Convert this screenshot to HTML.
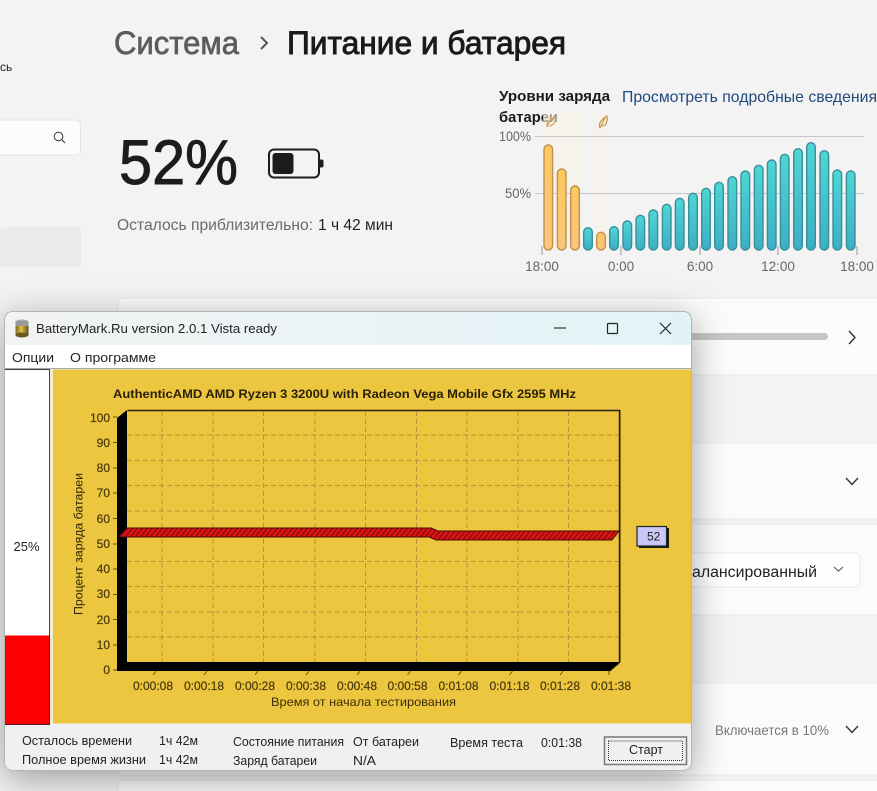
<!DOCTYPE html>
<html><head><meta charset="utf-8">
<style>
html,body{margin:0;padding:0;background:#f3f3f3;width:877px;height:791px;overflow:hidden}
svg{display:block;position:absolute;left:0;top:0;filter:blur(.35px)}
text{font-family:"Liberation Sans",sans-serif}
#win{position:absolute;left:4px;top:311px;width:688px;height:460px;border-radius:8px;box-shadow:0 8px 36px rgba(0,0,0,.36);background:#f0f0f0}
</style></head>
<body>
<svg width="877" height="791" viewBox="0 0 877 791">
<defs>
<linearGradient id="t" x1="0" y1="0" x2="0" y2="1"><stop offset="0" stop-color="#4fd6d4"/><stop offset="1" stop-color="#3cafc4"/></linearGradient>
<linearGradient id="o" x1="0" y1="0" x2="0" y2="1"><stop offset="0" stop-color="#fdc95f"/><stop offset="1" stop-color="#fbc57c"/></linearGradient>
</defs>
<rect width="877" height="791" fill="#f3f3f3"/>
<text x="0" y="71" font-size="12" fill="#222">сь</text>
<rect x="-5" y="120" width="85.500" height="35" rx="4" fill="#fcfcfc" stroke="#e4e4e4"/>
<circle cx="58.500" cy="136.500" r="4.300" fill="none" stroke="#444" stroke-width="1.100"/>
<path d="M61.500 139.500L65 143" stroke="#444" stroke-width="1.100"/>
<rect x="0" y="227" width="81" height="40" rx="3" fill="#ebebeb"/>

<text x="114" y="54" font-size="32" fill="#5c5c5c" stroke="#5c5c5c" stroke-width=".7" textLength="125" lengthAdjust="spacingAndGlyphs">Система</text>
<path d="M261 37L267 43L261 49" fill="none" stroke="#555" stroke-width="2"/>
<text x="287" y="54" font-size="32" fill="#1a1a1a" stroke="#1a1a1a" stroke-width=".9" textLength="279" lengthAdjust="spacingAndGlyphs">Питание и батарея</text>

<text x="119" y="184" font-size="63" fill="#1c1c1c" stroke="#1c1c1c" stroke-width=".9" textLength="119" lengthAdjust="spacingAndGlyphs">52%</text>
<rect x="269" y="149.500" width="50" height="28" rx="5" fill="none" stroke="#1c1c1c" stroke-width="2"/>
<rect x="272.500" y="153" width="21" height="21" rx="3" fill="#1c1c1c"/>
<path d="M320 159.500h1.500a2 2 0 0 1 2 2v4a2 2 0 0 1 -2 2h-1.500z" fill="#1c1c1c"/>
<text x="117" y="230" font-size="15.500" fill="#6a6a6a" textLength="196" lengthAdjust="spacingAndGlyphs">Осталось приблизительно:</text>
<text x="318" y="230" font-size="15.500" fill="#222" textLength="75" lengthAdjust="spacingAndGlyphs">1 ч 42 мин</text>

<text x="499" y="101" font-size="15" font-weight="bold" fill="#1b1b1b" textLength="111" lengthAdjust="spacingAndGlyphs">Уровни заряда</text>
<text x="499" y="122" font-size="15" font-weight="bold" fill="#1b1b1b" textLength="59" lengthAdjust="spacingAndGlyphs">батареи</text>
<text x="622" y="102" font-size="16" fill="#1f4a7c" textLength="255" lengthAdjust="spacingAndGlyphs">Просмотреть подробные сведения</text>

<rect x="543" y="110" width="38" height="140" fill="#f8f3e8" opacity=".6"/>
<rect x="595" y="110" width="13" height="140" fill="#f8f3e8" opacity=".6"/>
<path d="M547 127c-1-4 3-8 8-10c1 5-2 9-6 9M551 118l-4 9" fill="none" stroke="#d8a050" stroke-width="1.200"/>
<path d="M600 128c-2-5 2-9 7-12c1 5-1 10-5 10M605 118l-5 10" fill="none" stroke="#c89048" stroke-width="1.200"/>
<text x="499" y="141" font-size="14" fill="#666" textLength="32" lengthAdjust="spacingAndGlyphs">100%</text>
<text x="505" y="198" font-size="14" fill="#666" textLength="26" lengthAdjust="spacingAndGlyphs">50%</text>
<path d="M535 136.500H864M535 193.500H864" stroke="#c6c6c6" stroke-width="1"/>
<g stroke-width="1.400" stroke="#c09050" fill="url(#o)">
<rect x="544" y="145" width="8.600" height="105" rx="4.300"/>
<rect x="557.400" y="169" width="8.600" height="81" rx="4.300"/>
<rect x="570.700" y="186" width="8.600" height="64" rx="4.300"/>
<rect x="596.700" y="232.300" width="8.600" height="17.700" rx="4.300"/>
</g>
<g stroke-width="1.400" stroke="#3a8f9c" fill="url(#t)">
<rect x="583.700" y="227.700" width="8.600" height="22.300" rx="4.300"/>
<rect x="609.700" y="226.700" width="8.600" height="23.300" rx="4.300"/>
<rect x="623" y="221" width="8.600" height="29" rx="4.300"/>
<rect x="636" y="215.300" width="8.600" height="34.700" rx="4.300"/>
<rect x="649" y="210" width="8.600" height="40" rx="4.300"/>
<rect x="662.400" y="204.300" width="8.600" height="45.700" rx="4.300"/>
<rect x="675.400" y="198.300" width="8.600" height="51.700" rx="4.300"/>
<rect x="688.700" y="193.300" width="8.600" height="56.700" rx="4.300"/>
<rect x="701.700" y="188.300" width="8.600" height="61.700" rx="4.300"/>
<rect x="714.700" y="182.300" width="8.600" height="67.700" rx="4.300"/>
<rect x="728" y="176.700" width="8.600" height="73.300" rx="4.300"/>
<rect x="741" y="171" width="8.600" height="79" rx="4.300"/>
<rect x="754.400" y="165.300" width="8.600" height="84.700" rx="4.300"/>
<rect x="767.400" y="160" width="8.600" height="90" rx="4.300"/>
<rect x="780.400" y="154.300" width="8.600" height="95.700" rx="4.300"/>
<rect x="793.700" y="148.700" width="8.600" height="101.300" rx="4.300"/>
<rect x="806.700" y="142.700" width="8.600" height="107.300" rx="4.300"/>
<rect x="820" y="150.700" width="8.600" height="99.300" rx="4.300"/>
<rect x="833" y="170" width="8.600" height="80" rx="4.300"/>
<rect x="846.400" y="171" width="8.600" height="79" rx="4.300"/>
</g>
<path d="M542 246v9M621 246v9M700 246v9M778 246v9M857 246v9" stroke="#999" stroke-width="1"/>
<g font-size="13.500" fill="#666" text-anchor="middle">
<text x="542" y="271">18:00</text><text x="621" y="271">0:00</text><text x="700" y="271">6:00</text><text x="778" y="271">12:00</text><text x="857" y="271">18:00</text>
</g>

<rect x="118" y="298" width="770" height="77" rx="4" fill="#fbfbfb" stroke="#e8e8e8"/>
<rect x="600" y="333" width="228" height="7" rx="3.500" fill="#c6c6c6"/>
<path d="M849 331L855 337.500L849 344" fill="none" stroke="#333" stroke-width="1.400"/>
<rect x="118" y="443" width="770" height="76" rx="4" fill="#fbfbfb" stroke="#e8e8e8"/>
<path d="M846 478L852 484.500L858 478" fill="none" stroke="#333" stroke-width="1.400"/>
<rect x="118" y="524" width="770" height="91" rx="4" fill="#fbfbfb" stroke="#e8e8e8"/>
<rect x="600" y="553" width="260" height="34" rx="4" fill="#fefefe" stroke="#e8e8e8"/>
<text x="692" y="577" font-size="15.500" fill="#222" textLength="125" lengthAdjust="spacingAndGlyphs">алансированный</text>
<path d="M834 567L838.500 571L843 567" fill="none" stroke="#555" stroke-width="1.100"/>
<rect x="118" y="683" width="770" height="92" rx="4" fill="#fbfbfb" stroke="#e8e8e8"/>
<text x="715" y="735" font-size="14" fill="#777" textLength="114" lengthAdjust="spacingAndGlyphs">Включается в 10%</text>
<path d="M846 726L852 732.500L858 726" fill="none" stroke="#333" stroke-width="1.400"/>
<rect x="118" y="780" width="770" height="30" rx="4" fill="#fbfbfb" stroke="#e8e8e8"/>
</svg>

<div id="win"></div>

<svg width="877" height="791" viewBox="0 0 877 791">
<defs>
<linearGradient id="tb" x1="0" y1="0" x2="1" y2="0"><stop offset="0" stop-color="#f2f3f3"/><stop offset="1" stop-color="#e2f3f7"/></linearGradient>
<linearGradient id="cyl" x1="0" y1="0" x2="1" y2="0"><stop offset="0" stop-color="#7a6a30"/><stop offset=".45" stop-color="#e8c040"/><stop offset="1" stop-color="#5a5020"/></linearGradient>
<pattern id="h" width="5" height="5" patternUnits="userSpaceOnUse" patternTransform="skewX(-40)"><rect width="5" height="5" fill="#e01414"/><rect width="1.600" height="5" fill="#800c0c"/></pattern>
<clipPath id="w"><rect x="4" y="311" width="688" height="460" rx="8"/></clipPath>
</defs>
<g clip-path="url(#w)">
<rect x="4" y="311" width="688" height="34" fill="url(#tb)"/>
<rect x="4" y="345" width="688" height="23" fill="#fff"/>
<rect x="4" y="368" width="688" height="1.500" fill="#a8a8a8"/>
<rect x="4" y="369" width="688" height="402" fill="#f0f0f0"/>
<rect x="52" y="369.500" width="639" height="354" fill="#ecc63e"/>
<rect x="50" y="369.500" width="3" height="354" fill="#f2ecd0"/>
<rect x="691" y="369" width="1" height="355" fill="#fff"/>
<rect x="4.500" y="369.500" width="45" height="355" fill="#fff" stroke="#444" stroke-width="1"/>
<rect x="5" y="635.500" width="44" height="89" fill="#fa0000"/>
<path d="M4.500 635.500V724.500H49.500V635.500" fill="none" stroke="#5a2020"/>
</g>
<rect x="4.500" y="311.500" width="687" height="459" rx="8" fill="none" stroke="#b4b4b4" stroke-width="1"/>

<ellipse cx="22" cy="322" rx="6.500" ry="2.500" fill="#aaa"/>
<rect x="15.500" y="322" width="13" height="13" fill="url(#cyl)"/>
<ellipse cx="22" cy="335" rx="6.500" ry="2.500" fill="#6a5a20"/>
<rect x="15.500" y="321" width="13" height="5" fill="#999"/>
<text x="36" y="333" font-size="13" fill="#222" textLength="241" lengthAdjust="spacingAndGlyphs">BatteryMark.Ru version 2.0.1 Vista ready</text>
<path d="M554 328H566" stroke="#444" stroke-width="1.300"/>
<rect x="607.500" y="323.500" width="10" height="10" rx="1" fill="none" stroke="#222" stroke-width="1.200"/>
<path d="M660 323L671 334M671 323L660 334" stroke="#222" stroke-width="1.200"/>
<text x="12" y="362" font-size="13" fill="#222" textLength="42" lengthAdjust="spacingAndGlyphs">Опции</text>
<text x="70" y="362" font-size="13" fill="#222" textLength="86" lengthAdjust="spacingAndGlyphs">О программе</text>
<text x="26.500" y="551" font-size="13" fill="#222" text-anchor="middle">25%</text>

<text x="113" y="398" font-size="12" font-weight="bold" fill="#2a2008" textLength="463" lengthAdjust="spacingAndGlyphs">AuthenticAMD AMD Ryzen 3 3200U with Radeon Vega Mobile Gfx   2595 MHz</text>

<path d="M127.500 410.500H619.500V662.500" fill="none" stroke="#2a2008" stroke-width="1.500"/>
<g stroke="#b4963a" stroke-width="1" stroke-dasharray="5 3" fill="none">
<path d="M127 435H619M127 460.500H619M127 485.500H619M127 511H619M127 536H619M127 561.500H619M127 586.500H619M127 612H619M127 637H619"/>
<path d="M162 411V662M213 411V662M263.500 411V662M315 411V662M365.500 411V662M416.500 411V662M467 411V662M518 411V662M568.500 411V662"/>
</g>
<path d="M117 418L127 410V662H619V664L610 671H117Z" fill="#000"/>
<path d="M620 410V662L610 671" fill="none" stroke="#2a2008" stroke-width="1"/>
<path d="M113 417H117M113 442.500H117M113 468H117M113 493H117M113 518.500H117M113 544H117M113 569H117M113 594.500H117M113 619.500H117M113 645H117M113 670H117" stroke="#6a5518" stroke-width="1"/>
<path d="M153 675l3-4M204 675l3-4M255 675l3-4M306 675l3-4M357 675l3-4M407.500 675l3-4M458.500 675l3-4M509.500 675l3-4M560 675l3-4M609 675l0-4" stroke="#6a5518" stroke-width="1"/>

<path d="M120 535L127 528H431L438 531H619L612 540H436L429 537H120Z" fill="url(#h)" stroke="#4a0a0a" stroke-width="1"/>

<g font-size="12" fill="#4a3a0c" stroke="#4a3a0c" stroke-width=".2" text-anchor="end">
<text x="110" y="422">100</text><text x="110" y="447">90</text><text x="110" y="472">80</text><text x="110" y="497">70</text><text x="110" y="523">60</text><text x="110" y="548">50</text><text x="110" y="573">40</text><text x="110" y="598">30</text><text x="110" y="624">20</text><text x="110" y="649">10</text><text x="110" y="674">0</text>
</g>
<text transform="translate(82.500,615) rotate(-90)" font-size="12" fill="#2e2408" textLength="142" lengthAdjust="spacingAndGlyphs">Процент заряда батареи</text>
<g font-size="12" fill="#4a3a0c" stroke="#4a3a0c" stroke-width=".2" text-anchor="middle">
<text x="153" y="690">0:00:08</text><text x="204" y="690">0:00:18</text><text x="255" y="690">0:00:28</text><text x="306" y="690">0:00:38</text><text x="357" y="690">0:00:48</text><text x="407.500" y="690">0:00:58</text><text x="458.500" y="690">0:01:08</text><text x="509.500" y="690">0:01:18</text><text x="560" y="690">0:01:28</text><text x="611" y="690">0:01:38</text>
</g>
<text x="271" y="706" font-size="12" fill="#3a2e0a" textLength="185" lengthAdjust="spacingAndGlyphs">Время от начала тестирования</text>

<rect x="639" y="528" width="30" height="20" fill="#1a1a10"/>
<rect x="637" y="526.500" width="29.500" height="19.500" fill="#c8c8f8" stroke="#222" stroke-width="1.200"/>
<text x="647" y="540.500" font-size="12" fill="#222">52</text>

<g font-size="12.500" fill="#222">
<text x="22" y="745" textLength="110" lengthAdjust="spacingAndGlyphs">Осталось времени</text>
<text x="22" y="764" textLength="124" lengthAdjust="spacingAndGlyphs">Полное время жизни</text>
<text x="159" y="745" textLength="39" lengthAdjust="spacingAndGlyphs">1ч 42м</text>
<text x="159" y="764" textLength="39" lengthAdjust="spacingAndGlyphs">1ч 42м</text>
<text x="233" y="746" textLength="111" lengthAdjust="spacingAndGlyphs">Состояние питания</text>
<text x="233" y="765" textLength="84" lengthAdjust="spacingAndGlyphs">Заряд батареи</text>
<text x="353" y="746" textLength="66" lengthAdjust="spacingAndGlyphs">От батареи</text>
<text x="353" y="765" textLength="23" lengthAdjust="spacingAndGlyphs">N/A</text>
<text x="450" y="747" textLength="73" lengthAdjust="spacingAndGlyphs">Время теста</text>
<text x="541" y="747" textLength="41" lengthAdjust="spacingAndGlyphs">0:01:38</text>
</g>
<rect x="604.500" y="737" width="82" height="27.500" fill="#f0f0f0" stroke="#777" stroke-width="1.500"/>
<rect x="608.500" y="741" width="74" height="19.500" fill="none" stroke="#333" stroke-width="1" stroke-dasharray="1 1"/>
<text x="646" y="754" font-size="12.500" fill="#222" text-anchor="middle">Старт</text>
</svg>
</body></html>
